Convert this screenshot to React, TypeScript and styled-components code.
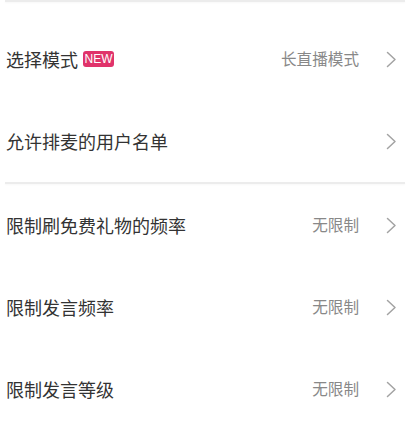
import React from "react";
import styled, { createGlobalStyle } from "styled-components";

const GlobalStyle = createGlobalStyle`
  html, body {
    margin: 0;
    padding: 0;
    background: #fff;
  }
  body {
    font-family: "Noto Sans CJK SC", "Noto Sans", sans-serif;
  }
`;

interface Item {
  title: string;
  value?: string;
  isNew?: boolean;
}

const groups: Item[][] = [
  [
    { title: "选择模式", value: "长直播模式", isNew: true },
    { title: "允许排麦的用户名单" },
  ],
  [
    { title: "限制刷免费礼物的频率", value: "无限制" },
    { title: "限制发言频率", value: "无限制" },
    { title: "限制发言等级", value: "无限制" },
  ],
];

const Chevron = () => (
  <svg width="11" height="17" viewBox="0 0 11 17" fill="none">
    <polyline
      points="1.5,1.5 9,8.5 1.5,15.5"
      stroke="#a3a3a3"
      strokeWidth="1.5"
      strokeLinecap="round"
      strokeLinejoin="round"
    />
  </svg>
);

const App = () => {
  return (
    <Page>
      <GlobalStyle />
      <Divider />
      {groups.map((group, gi) => (
        <React.Fragment key={gi}>
          {gi > 0 && <Divider />}
          <Group first={gi === 0}>
            {group.map((item) => (
              <Row key={item.title}>
                <Left>
                  <Title>{item.title}</Title>
                  {item.isNew && <Badge>NEW</Badge>}
                </Left>
                <Right>
                  {item.value && <Value>{item.value}</Value>}
                  <Chevron />
                </Right>
              </Row>
            ))}
          </Group>
        </React.Fragment>
      ))}
    </Page>
  );
};

export default App;

const Page = styled.div`
  width: 412px;
  height: 427px;
  overflow: hidden;
  background: #fff;
`;

const Divider = styled.div`
  height: 2px;
  margin: 0 7px 0 5px;
  background: #ececec;
  box-shadow: 0 1px 2px rgba(0, 0, 0, 0.03);
`;

const Group = styled.div<{ first?: boolean }>`
  display: flex;
  flex-direction: column;
  padding-top: ${(props) => (props.first ? "16px" : "0")};
`;

const Row = styled.div`
  height: 82px;
  display: flex;
  align-items: center;
  justify-content: space-between;
  padding: 0 15px 0 6px;
`;

const Left = styled.div`
  display: flex;
  align-items: center;
  gap: 5px;
`;

const Title = styled.span`
  font-size: 18px;
  color: #333;
  line-height: 1;
`;

const Badge = styled.span`
  display: inline-flex;
  align-items: center;
  justify-content: center;
  width: 31px;
  height: 16px;
  border-radius: 3px;
  background: #e0336b;
  color: #fff;
  font-family: "Liberation Sans", Arial, sans-serif;
  font-size: 12px;
  font-weight: 400;
`;

const Right = styled.div`
  display: flex;
  align-items: center;
  gap: 27px;
`;

const Value = styled.span`
  font-size: 15.6px;
  color: #888;
  line-height: 1;
`;
